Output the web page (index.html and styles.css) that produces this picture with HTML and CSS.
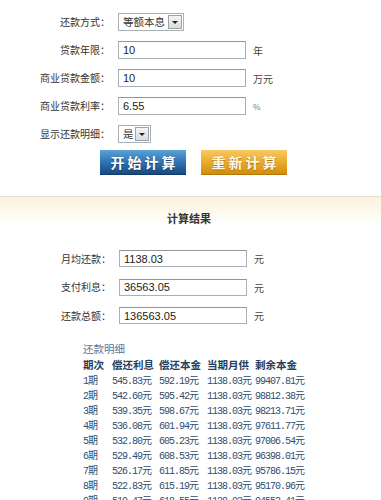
FILE: index.html
```html
<!DOCTYPE html>
<html lang="zh-CN">
<head>
  <meta charset="UTF-8" />
  <title>房贷计算器</title>
  <link rel="stylesheet" href="styles.css">
</head>
<body>

<!-- Параметры кредита -->
<div class="calc-form">
  <div class="row">
    <label class="label">还款方式：</label>
    <div class="fake-select">
      <span class="fake-select-text">等额本息</span>
      <span class="fake-select-arrow"></span>
    </div>
  </div>
  <div class="row">
    <label class="label">贷款年限：</label>
    <input class="field" type="text" value="10">
    <span class="unit">年</span>
  </div>
  <div class="row">
    <label class="label">商业贷款金额：</label>
    <input class="field" type="text" value="10">
    <span class="unit">万元</span>
  </div>
  <div class="row">
    <label class="label">商业贷款利率：</label>
    <input class="field" type="text" value="6.55">
    <span class="unit unit-small">%</span>
  </div>
  <div class="row">
    <label class="label">显示还款明细：</label>
    <div class="fake-select fake-select-short">
      <span class="fake-select-text">是</span>
      <span class="fake-select-arrow"></span>
    </div>
  </div>

  <div class="buttons">
    <button class="btn btn-blue">开始计算</button>
    <button class="btn btn-orange">重新计算</button>
  </div>
</div>

<!-- Результат -->
<div class="result">
  <div class="result-title">计算结果</div>

  <div class="result-rows">
    <div class="row row-result">
      <label class="label">月均还款：</label>
      <input class="field" type="text" value="1138.03">
      <span class="unit">元</span>
    </div>
    <div class="row row-result">
      <label class="label">支付利息：</label>
      <input class="field" type="text" value="36563.05">
      <span class="unit">元</span>
    </div>
    <div class="row row-result">
      <label class="label">还款总额：</label>
      <input class="field" type="text" value="136563.05">
      <span class="unit">元</span>
    </div>
  </div>

  <div class="detail">
    <div class="detail-title">还款明细</div>
    <table class="detail-table">
      <colgroup>
        <col class="c1"><col class="c2"><col class="c3"><col class="c4"><col class="c5">
      </colgroup>
      <thead>
        <tr><th>期次</th><th>偿还利息</th><th>偿还本金</th><th>当期月供</th><th>剩余本金</th></tr>
      </thead>
      <tbody>
        <tr><td>1期</td><td>545.83元</td><td>592.19元</td><td>1138.03元</td><td>99407.81元</td></tr>
        <tr><td>2期</td><td>542.60元</td><td>595.42元</td><td>1138.03元</td><td>98812.38元</td></tr>
        <tr><td>3期</td><td>539.35元</td><td>598.67元</td><td>1138.03元</td><td>98213.71元</td></tr>
        <tr><td>4期</td><td>536.08元</td><td>601.94元</td><td>1138.03元</td><td>97611.77元</td></tr>
        <tr><td>5期</td><td>532.80元</td><td>605.23元</td><td>1138.03元</td><td>97006.54元</td></tr>
        <tr><td>6期</td><td>529.49元</td><td>608.53元</td><td>1138.03元</td><td>96398.01元</td></tr>
        <tr><td>7期</td><td>526.17元</td><td>611.85元</td><td>1138.03元</td><td>95786.15元</td></tr>
        <tr><td>8期</td><td>522.83元</td><td>615.19元</td><td>1138.03元</td><td>95170.96元</td></tr>
        <tr><td>9期</td><td>519.47元</td><td>618.55元</td><td>1138.03元</td><td>94552.41元</td></tr>
      </tbody>
    </table>
  </div>
</div>

</body>
</html>
```

FILE: styles.css
```css
/* Общие стили */
body {
  margin: 0;
  padding: 0;
  background: #fff;
  font-family: "Noto Sans CJK SC", sans-serif;
  font-size: 10px;
  color: #333;
  overflow: hidden;
}

/* Форма параметров */
.calc-form {
  padding-top: 13px;
}

.row {
  display: flex;
  align-items: center;
  height: 18px;
  margin-bottom: 10px;
}

.label {
  width: 110px;
  text-align: right;
  margin-right: 8px;
  font-size: 10px;
  line-height: 18px;
  color: #333;
}

.field {
  box-sizing: border-box;
  width: 128px;
  height: 18px;
  margin: 0;
  padding: 0 4px;
  border: 1px solid #a9b0b8;
  border-top-color: #8e959e;
  font-family: "Liberation Sans", sans-serif;
  font-size: 11px;
  color: #222;
  background: #fff;
  outline: none;
}

.unit {
  margin-left: 7px;
  font-size: 10px;
  color: #444;
}

.unit-small {
  font-size: 8px;
  color: #777;
}

/* Имитация старого select */
.fake-select {
  box-sizing: border-box;
  display: flex;
  align-items: center;
  width: 66px;
  height: 18px;
  border: 1px solid #a9b0b8;
  background: #fff;
  padding: 0 1px 0 4px;
}

.fake-select-short {
  width: 33px;
}

.fake-select-text {
  flex: 1;
  font-size: 10.5px;
  color: #333;
  line-height: 16px;
}

.fake-select-arrow {
  position: relative;
  box-sizing: border-box;
  width: 14px;
  height: 14px;
  border: 1px solid #9aa1a9;
  background: linear-gradient(#f4f4f4, #dcdcdc);
}

.fake-select-arrow::after {
  content: "";
  position: absolute;
  left: 3px;
  top: 5px;
  border-left: 3px solid transparent;
  border-right: 3px solid transparent;
  border-top: 3px solid #222;
}

/* Кнопки */
.buttons {
  display: flex;
  gap: 15px;
  margin: -3px 0 0 100px;
}

.btn {
  width: 86px;
  height: 25px;
  border: none;
  padding: 0;
  font-family: "Noto Sans CJK SC", sans-serif;
  font-size: 14px;
  font-weight: bold;
  letter-spacing: 3px;
  text-indent: 3px;
  color: #fff;
  cursor: pointer;
}

.btn-blue {
  background: linear-gradient(#5aa2d6, #2e6fae 55%, #174a80);
  border-bottom: 1px solid #123a66;
  text-shadow: 0 1px 1px #1a3e66;
}

.btn-orange {
  background: linear-gradient(#f6c960, #e7a92a 55%, #d48c0c);
  border-bottom: 1px solid #b5770a;
  text-shadow: 0 1px 1px #a86d0a;
  color: #fff8ea;
}

/* Блок результата */
.result {
  margin-top: 21px;
  border-top: 1px solid #e6dfd0;
  background: linear-gradient(#fcf2dc, #fff 28px);
}

.result-title {
  padding-top: 13px;
  text-align: center;
  font-size: 11px;
  font-weight: bold;
  line-height: 16px;
  color: #333;
  padding-right: 3px;
}

.result-rows {
  padding-top: 24px;
}

.row-result {
  height: 17px;
  margin-bottom: 11.5px;
}

.row-result .label {
  width: 111px;
}

.row-result .field {
  height: 17px;
}

/* Таблица платежей */
.detail {
  padding-top: 5px;
  padding-left: 83px;
}

.detail-title {
  font-size: 10.5px;
  line-height: 16px;
  color: #5d7491;
}

.detail-table {
  border-collapse: collapse;
  table-layout: fixed;
  width: 240px;
}

.c1 { width: 29px; }
.c2 { width: 47px; }
.c3 { width: 48px; }
.c4 { width: 48px; }
.c5 { width: 68px; }

.detail-table th {
  padding: 0;
  height: 15px;
  text-align: left;
  font-size: 10.5px;
  font-weight: bold;
  color: #23405f;
  white-space: nowrap;
}

.detail-table td {
  padding: 0;
  height: 15px;
  font-family: "Liberation Mono", "Noto Sans CJK SC", monospace;
  font-size: 10px;
  letter-spacing: -1px;
  color: #2f4d70;
  white-space: nowrap;
}
```
